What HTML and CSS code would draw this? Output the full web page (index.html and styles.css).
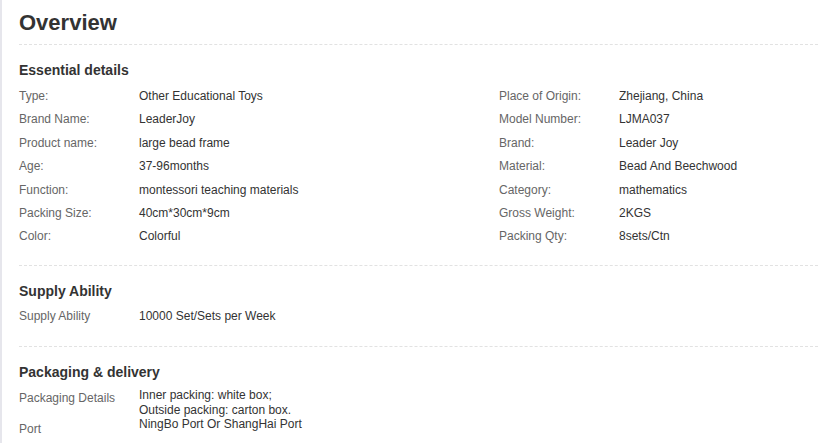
FILE: index.html
```html
<!DOCTYPE html>
<html lang="en">
<head>
<meta charset="utf-8">
<title>Overview</title>
<link rel="stylesheet" href="styles.css">
</head>
<body>
<div class="page">
  <h1 class="title">Overview</h1>

  <section class="block">
    <h2 class="block-title">Essential details</h2>
    <div class="grid">
      <div class="row"><span class="label">Type:</span><span class="value">Other Educational Toys</span></div>
      <div class="row"><span class="label">Place of Origin:</span><span class="value">Zhejiang, China</span></div>
      <div class="row"><span class="label">Brand Name:</span><span class="value">LeaderJoy</span></div>
      <div class="row"><span class="label">Model Number:</span><span class="value">LJMA037</span></div>
      <div class="row"><span class="label">Product name:</span><span class="value">large bead frame</span></div>
      <div class="row"><span class="label">Brand:</span><span class="value">Leader Joy</span></div>
      <div class="row"><span class="label">Age:</span><span class="value">37-96months</span></div>
      <div class="row"><span class="label">Material:</span><span class="value">Bead And Beechwood</span></div>
      <div class="row"><span class="label">Function:</span><span class="value">montessori teaching materials</span></div>
      <div class="row"><span class="label">Category:</span><span class="value">mathematics</span></div>
      <div class="row"><span class="label">Packing Size:</span><span class="value">40cm*30cm*9cm</span></div>
      <div class="row"><span class="label">Gross Weight:</span><span class="value">2KGS</span></div>
      <div class="row"><span class="label">Color:</span><span class="value">Colorful</span></div>
      <div class="row"><span class="label">Packing Qty:</span><span class="value">8sets/Ctn</span></div>
    </div>
  </section>

  <section class="block block-supply">
    <h2 class="block-title">Supply Ability</h2>
    <div class="row"><span class="label">Supply Ability</span><span class="value">10000 Set/Sets per Week</span></div>
  </section>

  <section class="block block-pack">
    <h2 class="block-title">Packaging &amp; delivery</h2>
    <div class="row row-multi"><span class="label">Packaging Details</span><span class="value">Inner packing: white box;<br>Outside packing: carton box.</span></div>
    <div class="row row-multi"><span class="label">Port</span><span class="value">NingBo Port Or ShangHai Port</span></div>
  </section>
</div>
</body>
</html>
```
FILE: styles.css
```css
html, body {
  margin: 0;
  padding: 0;
  background: #ffffff;
}

body {
  font-family: "Liberation Sans", Arial, sans-serif;
  color: #333333;
}

.page {
  border-left: 2px solid #e6e6ec;
  min-height: 443px;
  box-sizing: border-box;
  padding-left: 17px;
}

.title {
  margin: 0;
  padding-top: 8px;
  font-size: 22px;
  line-height: 30px;
  height: 44px;
  box-sizing: border-box;
  font-weight: bold;
  color: #333333;
}

.block {
  border-top: 1px dashed #e2e2e2;
  padding-top: 15px;
  padding-bottom: 16px;
}

.block-supply {
  padding-bottom: 18px;
}

.block-title {
  margin: 0 0 4px 0;
  font-size: 14px;
  line-height: 20px;
  font-weight: bold;
  color: #333333;
}

.block-pack .block-title {
  margin-bottom: 6px;
}

.grid {
  display: grid;
  grid-template-columns: 480px 1fr;
  padding-top: 1px;
}

.row {
  display: flex;
  font-size: 12px;
  line-height: 23.4px;
}

.label {
  width: 120px;
  flex: none;
  color: #666666;
}

.value {
  color: #333333;
}

.row-multi {
  line-height: 20px;
  margin-bottom: 2px;
}

.row-multi .value {
  line-height: 14.5px;
}

.row-multi + .row-multi {
  margin-bottom: 0;
}

.row-multi + .row-multi .value {
  margin-top: -2px;
}
```
